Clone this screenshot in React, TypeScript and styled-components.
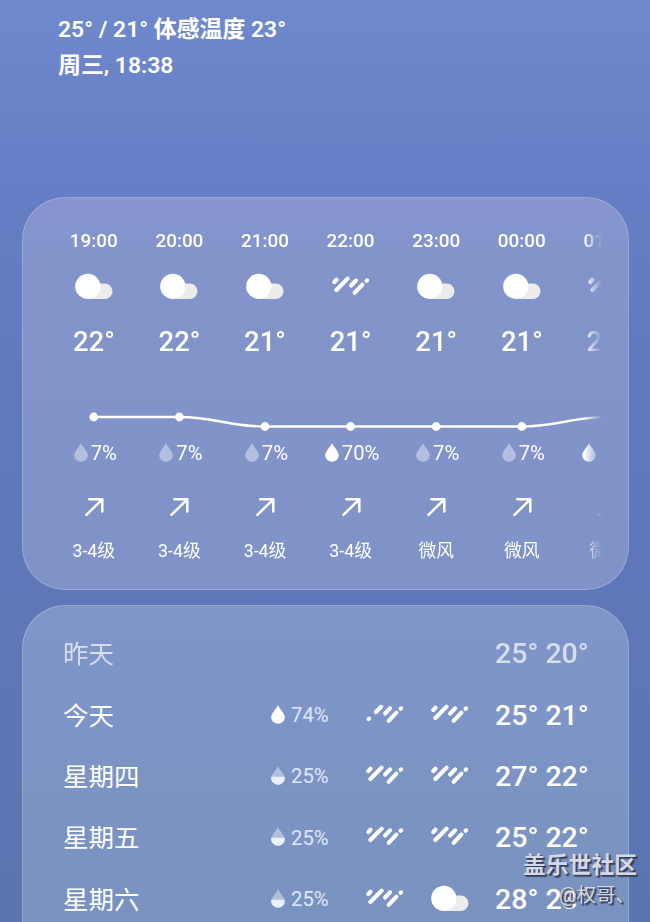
import React from 'react';
import styled, { createGlobalStyle } from 'styled-components';

type Sky = 'cloud' | 'rain' | 'lightRain'

interface Hour {
  time: string,
  sky: Sky,
  temp: number,
  rain: number,
  wind: string
}

interface Day {
  name: string,
  rain?: number,
  day?: Sky,
  night?: Sky,
  high: number,
  low: number
}

const COLUMN = 85.6

const hours: Hour[] = [
  { time: '19:00', sky: 'cloud', temp: 22, rain: 7, wind: '3-4级' },
  { time: '20:00', sky: 'cloud', temp: 22, rain: 7, wind: '3-4级' },
  { time: '21:00', sky: 'cloud', temp: 21, rain: 7, wind: '3-4级' },
  { time: '22:00', sky: 'rain', temp: 21, rain: 70, wind: '3-4级' },
  { time: '23:00', sky: 'cloud', temp: 21, rain: 7, wind: '微风' },
  { time: '00:00', sky: 'cloud', temp: 21, rain: 7, wind: '微风' },
  { time: '01:00', sky: 'rain', temp: 22, rain: 70, wind: '微风' },
]

const days: Day[] = [
  { name: '昨天', high: 25, low: 20 },
  { name: '今天', rain: 74, day: 'lightRain', night: 'rain', high: 25, low: 21 },
  { name: '星期四', rain: 25, day: 'rain', night: 'rain', high: 27, low: 22 },
  { name: '星期五', rain: 25, day: 'rain', night: 'rain', high: 25, low: 22 },
  { name: '星期六', rain: 25, day: 'rain', night: 'cloud', high: 28, low: 23 },
]

const GlobalStyle = createGlobalStyle`
  * {
    box-sizing: border-box;
  }
  body {
    margin: 0;
    overflow: hidden;
    font-family: Roboto, "Noto Sans CJK SC", sans-serif;
    color: #fff;
  }
`

const Page = styled.main`
  position: relative;
  width: 650px;
  height: 922px;
  overflow: hidden;
  background: linear-gradient(#7089cd 0, #667ec5 180px, #6178bd 400px, #5f77b9 600px, #5a75b0 922px);
`

const Header = styled.header`
  height: 197px;
  padding: 12px 0 0 58px;
  font-size: 22.9px;
  font-weight: 600;
  line-height: 35.5px;
`

const Card = styled.section`
  width: 607px;
  margin-left: 22px;
  border: 1px solid rgba(255, 255, 255, 0.2);
  border-radius: 43px;
`

const HourlyCard = styled(Card)`
  height: 393px;
  padding: 23px 26px 0 28px;
  background: linear-gradient(#8795d0 0, #8294ca 70px, #8093c8 100%);
`

const DailyCard = styled(Card)`
  height: 400px;
  margin-top: 15px;
  padding: 17px 39px 0 40px;
  background: linear-gradient(#8095ca 0, #7d95c6 120px, #7a92bf 317px);
`

const HourStrip = styled.div`
  height: 360px;
  overflow: hidden;
  mask-image: linear-gradient(to right, #000 calc(100% - 18px), transparent);
`

const HourRow = styled.div`
  display: grid;
  grid-template-columns: repeat(7, ${COLUMN}px);
`

const HourColumn = styled.div`
  display: flex;
  flex-direction: column;
  align-items: center;
`

const Cell = styled.div<{ $height: number }>`
  display: flex;
  align-items: center;
  justify-content: center;
  height: ${props => props.$height}px;
  white-space: nowrap;
`

const Time = styled(Cell)`
  font-size: 18.9px;
  font-weight: 500;
`

const Temp = styled(Cell)`
  font-size: 27.5px;
  font-weight: 500;
`

const Precipitation = styled(Cell)`
  gap: 3px;
  padding-left: 3px;
  font-size: 20.3px;
`

const Wind = styled(Cell)`
  font-size: 17.8px;
`

const Chart = styled.svg`
  display: block;
  margin-top: 32px;
`

const DropIcon = styled.svg`
  margin-bottom: 2px;
`

const DayRow = styled.div<{ $past?: boolean }>`
  display: grid;
  grid-template-columns: 208px 81px 65px 66px 1fr;
  align-items: center;
  height: 61.4px;
  opacity: ${props => props.$past ? 0.68 : 1};
`

const DayName = styled.div`
  padding-bottom: 4px;
  font-size: 25.5px;
`

const DayRain = styled.div`
  display: flex;
  align-items: center;
  gap: 6px;
  font-size: 20.3px;
  color: #dfe8fb;
`

const DaySky = styled.div`
  display: flex;
  justify-content: center;
  padding-bottom: 1px;
`

const DayTemps = styled.div`
  padding-left: 12px;
  font-size: 28.5px;
  font-weight: 500;
  white-space: nowrap;
`

const Watermark = styled.div`
  position: absolute;
  top: 849px;
  left: 523px;
  color: #d3d9e6;
  text-shadow: 1px 1px 1px #333c55, 2px 2px 1px rgba(40, 48, 75, 0.7);
  white-space: nowrap;
`

const Community = styled.div`
  font-size: 22.8px;
  font-weight: 700;
  line-height: 33px;
`

const Author = styled.div`
  padding-left: 36px;
  font-size: 19.5px;
  line-height: 28px;
`

function SkyIcon({ sky }: { sky: Sky }) {
  if (sky === 'cloud') {
    return (
      <svg width="38" height="28" viewBox="0 0 38 28">
        <rect x="10" y="10.5" width="27.5" height="15.5" rx="7.75" fill="#ececec" />
        <circle cx="12.8" cy="13.4" r="12.6" fill="#fff" />
      </svg>
    )
  }
  return (
    <svg width="38" height="28" viewBox="0 0 38 28" stroke="#fff" strokeWidth="4.1" strokeLinecap="round">
      {sky === 'rain'
        ? <path d="M2.3 9.1l2.2-2.4M4.4 17L15.6 5.6" />
        : <path d="M2.5 18.1l.5-.5M9.9 11l5.2-5.2" />}
      <path d="M19.1 12.5l5-5.2M22.6 19.8l7.8-8.2M34.6 7.8l.5-.5" />
    </svg>
  )
}

function Drop({ rain }: { rain: number }) {
  return (
    <DropIcon width="14" height="19" viewBox="0 0 14 19">
      <path
        d="M7 0C8.4 3.6 13.8 8.6 13.8 12.2A6.8 6.6 0 0 1 .2 12.2C.2 8.6 5.6 3.6 7 0z"
        fill="#fff"
        opacity={rain >= 60 ? 1 : 0.4}
      />
      {rain >= 20 && rain < 60 && <path d="M.4 10.8h13.2Q13.8 11.5 13.8 12.2A6.8 6.6 0 0 1 .2 12.2Q.2 11.5 .4 10.8z" fill="#eaf0fd" />}
    </DropIcon>
  )
}

function WindArrow() {
  return (
    <svg width="20" height="20" viewBox="0 0 20 20" fill="none" stroke="#fff" strokeWidth="2.5" strokeLinecap="round" strokeLinejoin="round">
      <path d="M2.4 17.9L18.3 2.3M5.3 2.3h13v12.2" />
    </svg>
  )
}

function TemperatureChart() {
  const points = hours.map((hour, index) => ({
    x: COLUMN * (index + 0.5),
    y: hour.temp === 22 ? 17 : 26.5
  }))
  const line = points.slice(1).reduce((path, point, index) => {
    const previous = points[index]
    const bend = COLUMN * 0.42
    return `${path} C${previous.x + bend} ${previous.y} ${point.x - bend} ${point.y} ${point.x} ${point.y}`
  }, `M${points[0].x} ${points[0].y}`)

  return (
    <Chart width={COLUMN * 7} height="40">
      <path d={line} fill="none" stroke="#fff" strokeWidth="2.3" />
      {points.map(point => <circle key={point.x} cx={point.x} cy={point.y} r="4.4" fill="#fff" />)}
    </Chart>
  )
}

export default function App() {
  return (
    <Page>
      <GlobalStyle />
      <Header>
        <div>25° / 21° 体感温度 23°</div>
        <div>周三, 18:38</div>
      </Header>

      <HourlyCard>
        <HourStrip>
          <HourRow>
            {hours.map(hour => (
              <HourColumn key={hour.time}>
                <Time $height={38}>{hour.time}</Time>
                <Cell $height={56}><SkyIcon sky={hour.sky} /></Cell>
                <Temp $height={53}>{hour.temp}°</Temp>
              </HourColumn>
            ))}
          </HourRow>
          <TemperatureChart />
          <HourRow>
            {hours.map(hour => (
              <HourColumn key={hour.time}>
                <Precipitation $height={26}><Drop rain={hour.rain} />{hour.rain}%</Precipitation>
                <Cell $height={81}><WindArrow /></Cell>
                <Wind $height={4}>{hour.wind}</Wind>
              </HourColumn>
            ))}
          </HourRow>
        </HourStrip>
      </HourlyCard>

      <DailyCard>
        {days.map((day, index) => (
          <DayRow key={day.name} $past={index === 0}>
            <DayName>{day.name}</DayName>
            <DayRain>
              {day.rain !== undefined && <><Drop rain={day.rain} />{day.rain}%</>}
            </DayRain>
            <DaySky>{day.day && <SkyIcon sky={day.day} />}</DaySky>
            <DaySky>{day.night && <SkyIcon sky={day.night} />}</DaySky>
            <DayTemps>{day.high}° {day.low}°</DayTemps>
          </DayRow>
        ))}
      </DailyCard>

      <Watermark>
        <Community>盖乐世社区</Community>
        <Author>@权哥、</Author>
      </Watermark>
    </Page>
  )
}
